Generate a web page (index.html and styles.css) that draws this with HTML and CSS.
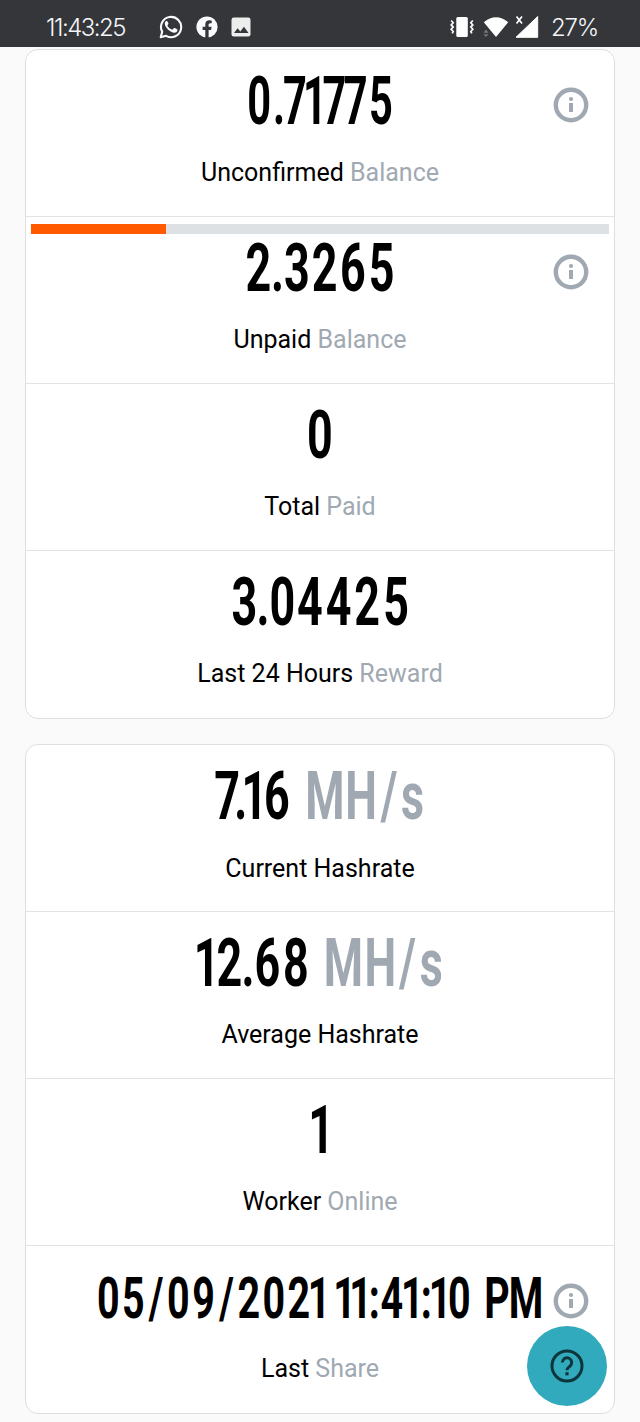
FILE: index.html
```html
<!DOCTYPE html>
<html lang="en">
<head>
    <meta charset="UTF-8">
    <meta name="viewport" content="width=device-width, initial-scale=1.0">
    <title>Miner Dashboard</title>
    <link rel="stylesheet" href="styles.css">
</head>
<body>

    <svg class="symbols" width="0" height="0">
        <symbol id="info" viewBox="0 0 36 36">
            <circle cx="18" cy="18" r="15.2" fill="none" stroke="#a0a9b2" stroke-width="4.4"/>
            <circle cx="18" cy="12" r="2.1" fill="#a0a9b2"/>
            <path d="M16 16h4v9h-4z" fill="#a0a9b2"/>
        </symbol>
    </svg>

    <div class="status-bar">
        <span class="clock">11:43:25</span>
        <div class="notifications">
            <svg width="24" height="24" viewBox="0 0 24 24">
                <path d="M1.7 22.3l1.5-5.5A10.1 10.1 0 1 1 7.1 20.8z" fill="none" stroke="#fafbff" stroke-width="2.1" stroke-linejoin="round"/>
                <path d="M8.6 6.6c-.4-.8-.8-.7-1.3-.6-1 .4-1.6 1.5-1.5 2.8.4 3.9 5 8.3 9 8.9 1.7.2 3.3-.8 3.6-2 .2-1 .1-1.2-.7-1.6l-2-1c-.5-.2-.8-.1-1.2.4l-.9 1c-.3.3-.5.3-1 .1-1.9-.9-3.2-2.1-4.1-3.8-.2-.4-.1-.6.2-.9l.8-1.1z" fill="#fafbff"/>
            </svg>
            <svg width="22" height="22" viewBox="0 0 22 22">
                <circle cx="11" cy="11" r="10.6" fill="#fafbff"/>
                <path d="M9.3 22v-8H6.6v-3.2h2.7V8.5c0-2.8 1.6-4.2 4.1-4.2l2.3.2v2.7h-1.3c-1.3 0-1.8.8-1.8 1.7v1.9h3l-.5 3.2h-2.500v8z" fill="#35363a"/>
            </svg>
            <svg width="20" height="20" viewBox="0 0 20 20">
                <rect x=".5" y=".5" width="19" height="19" rx="2.2" fill="#eceded"/>
                <path d="M3 16l3.6-4.7 2.7 3.2L13 9.700l4.500 6.300z" fill="#35363a"/>
            </svg>
        </div>
        <div class="indicators">
            <svg width="24" height="22" viewBox="0 0 24 22">
                <rect x="6.3" y="1" width="11.5" height="20" rx="1.5" fill="#fff"/>
                <path d="M1.2 4.500l2 2.200-2 2.200 2 2.200-2 2.200 2 2.200-1 1.800M22.800 4.500l-2 2.200 2 2.200-2 2.200 2 2.200-2 2.200 1 1.800" fill="none" stroke="#fff" stroke-width="1.7"/>
            </svg>
            <svg width="26" height="22" viewBox="0 0 26 22">
                <path d="M.8 6.200Q13-3.800 25.200 6.200L13 21z" fill="#fff"/>
                <path d="M.5 16.700L3 13.500l2.500 3.200zM.5 18.300L3 21l2.500-2.700z" fill="#77787b"/>
            </svg>
            <svg width="24" height="24" viewBox="0 0 24 24">
                <path d="M1.500 1.500l5.500 7M7 1.500l-5.500 7" stroke="#fff" stroke-width="1.7"/>
                <path d="M22.700 1.500v20.800H1z" fill="#fff" stroke="#fff" stroke-linejoin="round"/>
            </svg>
            <span class="battery">27%</span>
        </div>
    </div>

    <!-- values are condensed by the stretched viewBox, x gives the centre of each character -->
    <main class="stats">
        <section class="card">
            <div class="row">
                <svg class="value" viewBox="0 0 933.3 100" preserveAspectRatio="none"><text y="74" x="370.2 401.5 427 458.7 489.7 523.4 563.5">0.71775</text></svg>
                <p class="label">Unconfirmed <span>Balance</span></p>
                <svg class="info"><use href="#info"/></svg>
            </div>
            <div class="row">
                <div class="progress"><div class="progress-fill" style="width: 23.3%"></div></div>
                <svg class="value" viewBox="0 0 864.7 100" preserveAspectRatio="none"><text y="74" x="341.6 370 398.3 439.3 480.6 522.8">2.3265</text></svg>
                <p class="label">Unpaid <span>Balance</span></p>
                <svg class="info"><use href="#info"/></svg>
            </div>
            <div class="row">
                <svg class="value" viewBox="0 0 864.7 100" preserveAspectRatio="none"><text y="74" x="432">0</text></svg>
                <p class="label">Total <span>Paid</span></p>
            </div>
            <div class="row">
                <svg class="value" viewBox="0 0 864.7 100" preserveAspectRatio="none"><text y="74" x="321 348.5 377.2 417.6 459.9 501.8 544.4">3.04425</text></svg>
                <p class="label">Last 24 Hours <span>Reward</span></p>
            </div>
        </section>

        <section class="card">
            <div class="row">
                <svg class="value" viewBox="0 0 864.7 100" preserveAspectRatio="none"><text y="74" x="295.6 316 336 369.1 400 439.4 492.9 533.8 568.4">7.16 <tspan class="unit">MH/s</tspan></text></svg>
                <p class="label">Current Hashrate</p>
            </div>
            <div class="row">
                <svg class="value" viewBox="0 0 864.7 100" preserveAspectRatio="none"><text y="74" x="265.7 299 326.5 355 397 428 466.6 521 561 595.9">12.68 <tspan class="unit">MH/s</tspan></text></svg>
                <p class="label">Average Hashrate</p>
            </div>
            <div class="row">
                <svg class="value" viewBox="0 0 864.7 100" preserveAspectRatio="none"><text y="74" x="434">1</text></svg>
                <p class="label">Worker <span>Online</span></p>
            </div>
            <div class="row">
                <svg class="value" viewBox="0 0 864.7 100" preserveAspectRatio="none"><text class="date" y="72" x="121 157.8 191.2 224 261.3 295.1 327.5 364.4 401.2 430.9 450 468.6 492.2 512.3 537.8 568.1 588.8 608.8 637.2 660 692.6 735.3">05/09/2021 11:41:10 PM</text></svg>
                <p class="label">Last <span>Share</span></p>
                <svg class="info"><use href="#info"/></svg>
            </div>
        </section>
    </main>

    <button class="help" aria-label="Help">
        <svg width="34" height="34" viewBox="0 0 34 34">
            <circle cx="17" cy="17" r="15" fill="none" stroke="#0d353c" stroke-width="3"/>
            <path d="M12.3 13.500a4.700 4.700 0 1 1 7.600 3.700c-1.700 1.300-2.900 1.900-2.900 4" fill="none" stroke="#0d353c" stroke-width="3"/>
            <rect x="15.4" y="23.2" width="3.2" height="3.2" fill="#0d353c"/>
        </svg>
    </button>

</body>
</html>
```
FILE: styles.css
```css
* {
    box-sizing: border-box;
}

body {
    margin: 0;
    height: 1422px;
    overflow: hidden;
    background: #fafafa;
    font-family: Roboto, "Liberation Sans", sans-serif;
    color: #000;
}

.symbols {
    display: none;
}

.status-bar {
    display: flex;
    align-items: center;
    height: 47px;
    padding: 7px 42px 0 46px;
    background: #35363a;
    color: #f4f5f8;
    font: 300 24px Inter, sans-serif;
}

.clock {
    width: 113px;
    letter-spacing: -1.5px;
}

.notifications {
    display: flex;
    align-items: center;
    gap: 13px;
}

.indicators {
    display: flex;
    align-items: center;
    gap: 9px;
    margin-left: auto;
}

.indicators svg:nth-child(3) {
    margin-left: -3px;
}

.battery {
    margin-left: 3px;
    letter-spacing: -1.2px;
}

.stats {
    display: flex;
    flex-direction: column;
    gap: 25.6px;
    padding: 2px 25px 0;
}

.card {
    background: #fff;
    border: 1px solid #dddfe1;
    border-radius: 13px;
}

.row {
    position: relative;
    height: 166.9px;
    border-bottom: 1px solid #e0e2e4;
}

.row:last-child {
    border-bottom: none;
}

.value {
    display: block;
    width: 588px;
    height: 100px;
    font-size: 66px;
    font-weight: 700;
    text-anchor: middle;
}

.value .unit {
    fill: #a0a9b2;
}

.value .date {
    font-size: 58px;
}

.label {
    margin: 6.4px 0 0;
    text-align: center;
    font-size: 25px;
    line-height: 34px;
}

.label span {
    color: #a0a9b2;
}

.progress {
    position: absolute;
    top: 7px;
    left: 5px;
    right: 5px;
    height: 10px;
    background: #dee1e3;
}

.progress-fill {
    height: 100%;
    background: #ff5a00;
}

/* sits over the value at the right edge of the row */
.info {
    position: absolute;
    top: 37px;
    right: 25px;
    width: 36px;
    height: 36px;
}

.help {
    position: absolute;
    left: 527px;
    top: 1326px;
    display: flex;
    align-items: center;
    justify-content: center;
    width: 80px;
    height: 80px;
    padding: 0;
    border: none;
    border-radius: 50%;
    background: #32aabd;
}
```
